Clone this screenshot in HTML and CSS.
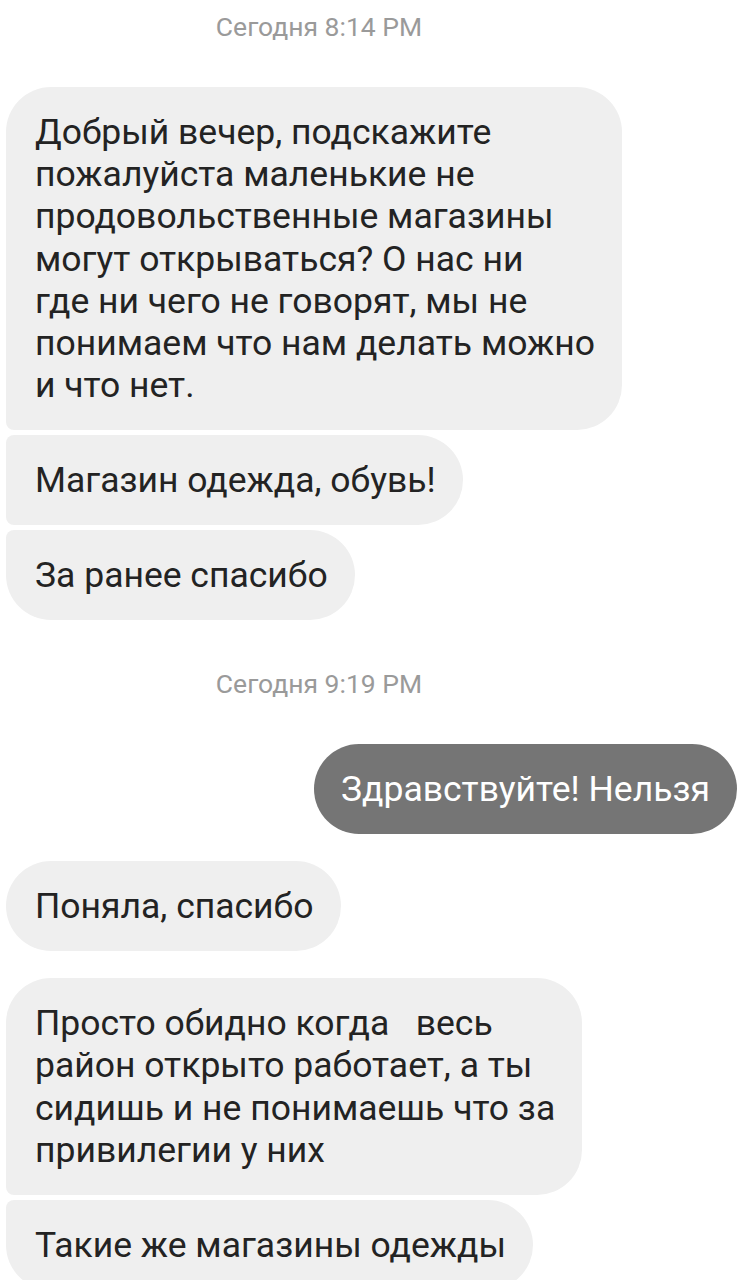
FILE: index.html
```html
<!DOCTYPE html>
<html lang="ru">
	<head>
		<meta charset="utf-8" />
		<title>Чат</title>
		<link rel="stylesheet" href="styles.css">
	</head>

	<body>
		<div id="chat">
			<p class="stamp first-stamp">Сегодня 8:14 PM</p>

			<div class="group">
				<p class="msg in top">Добрый вечер, подскажите<br>пожалуйста маленькие не<br>продовольственные магазины<br>могут открываться? О нас ни<br>где ни чего не говорят, мы не<br>понимаем что нам делать можно<br>и что нет.</p>
				<p class="msg in mid">Магазин одежда, обувь!</p>
				<p class="msg in end">За ранее спасибо</p>
			</div>

			<p class="stamp">Сегодня 9:19 PM</p>

			<div class="group out">
				<p class="msg sent">Здравствуйте! Нельзя</p>
			</div>

			<div class="group">
				<p class="msg in">Поняла, спасибо</p>
			</div>

			<div class="group">
				<p class="msg in top">Просто обидно когда &nbsp; весь<br>район открыто работает, а ты<br>сидишь и не понимаешь что за<br>привилегии у них</p>
				<p class="msg in end">Такие же магазины одежды</p>
			</div>
		</div>
	</body>
</html>
```

FILE: styles.css
```css
body{
	margin: 0;
	background-color: #ffffff;
	font-family: Roboto, "Noto Sans", sans-serif;
}

#chat{
	width: 744px;
	height: 1280px;
	overflow: hidden;
	padding: 0 7px 0 6px;
	box-sizing: border-box;
}

.stamp{
	margin: 49px 105px 45px 0;
	text-align: center;
	color: #9a9a9a;
	font-size: 26.5px;
	line-height: 30px;
}
.first-stamp{
	margin-top: 12px;
}

.group{
	display: flex;
	flex-direction: column;
	align-items: flex-start;
	gap: 4.5px;
	margin-bottom: 27px;
}
.group.out{
	align-items: flex-end;
}

.msg{
	margin: 0;
	padding: 24px 27px 24px 29px;
	font-size: 35.5px;
	line-height: 42.2px;
	border-radius: 45px;
	white-space: nowrap;
}

.in{
	background-color: #efefef;
	color: #232323;
}
.in.top{
	border-bottom-left-radius: 8px;
}
.in.mid{
	border-top-left-radius: 8px;
	border-bottom-left-radius: 8px;
}
.in.end{
	border-top-left-radius: 8px;
}

.sent{
	background-color: #757575;
	color: #ffffff;
	padding-left: 27px;
}
```
